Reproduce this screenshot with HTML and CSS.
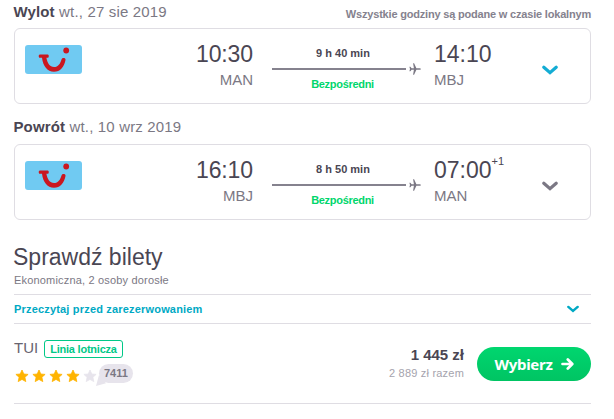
FILE: index.html
```html
<!DOCTYPE html>
<html lang="pl">
<head>
<meta charset="utf-8">
<title>Sprawdź bilety</title>
<link rel="stylesheet" href="styles.css">
</head>
<body>
<svg class="defs" aria-hidden="true">
  <symbol id="smile" viewBox="0 0 57 29">
    <path d="M14.8 9.4H22.8C24.1 9.5 24.1 12.6 22.8 12.7H21.4C22.4 18 24.8 22 29 22C33 22 35.4 18.6 36.6 14.2C37.3 12.4 40.9 12.8 40.5 15C39.2 22 35.2 26.8 29 26.8C22.2 26.8 18 20.9 17 12.7H14.8C13.4 12.6 13.4 9.4 14.8 9.4Z"/>
    <circle cx="41.2" cy="5.5" r="2.9"/>
  </symbol>
  <symbol id="chevron" viewBox="0 0 16 10"><path d="M1.8 2.2L8 7.6L14.2 2.2" fill="none" stroke="currentColor" stroke-width="3.2" stroke-linecap="round" stroke-linejoin="miter"/></symbol>
  <symbol id="plane" viewBox="0 0 12 12"><path d="M12 6C12 6.6 11 6.8 10 6.8H7.4L5.1 11.8H4.1L4.9 6.8H2.6L1.4 8.3H.4L1 6L.4 3.7H1.4L2.6 5.2H4.9L4.1.2H5.1L7.4 5.2H10C11 5.2 12 5.4 12 6Z"/></symbol>
  <symbol id="star" viewBox="0 0 14 14"><path d="M7 1L8.8 5L13.1 5.4L9.9 8.3L10.8 12.6L7 10.4L3.2 12.6L4.1 8.3L.9 5.4L5.2 5Z" fill="currentColor" stroke="currentColor" stroke-width=".8" stroke-linejoin="round"/></symbol>
</svg>
<main class="page">
  <header class="leg-head">
    <div><b>Wylot</b> wt., 27 sie 2019</div>
    <div class="note">Wszystkie godziny są podane w czasie lokalnym</div>
  </header>
  <section class="card">
    <svg class="logo"><use href="#smile"/></svg>
    <div class="stop from"><div class="time">10:30</div><div class="code">MAN</div></div>
    <div class="route">
      <div class="duration">9 h 40 min</div>
      <div class="track"><span class="line"></span><svg class="plane"><use href="#plane"/></svg></div>
      <div class="direct">Bezpośredni</div>
    </div>
    <div class="stop"><div class="time">14:10</div><div class="code">MBJ</div></div>
    <svg class="chevron blue"><use href="#chevron"/></svg>
  </section>
  <header class="leg-head return">
    <div><b>Powrót</b> wt., 10 wrz 2019</div>
  </header>
  <section class="card">
    <svg class="logo"><use href="#smile"/></svg>
    <div class="stop from"><div class="time">16:10</div><div class="code">MBJ</div></div>
    <div class="route">
      <div class="duration">8 h 50 min</div>
      <div class="track"><span class="line"></span><svg class="plane"><use href="#plane"/></svg></div>
      <div class="direct">Bezpośredni</div>
    </div>
    <div class="stop"><div class="time">07:00<span class="plus">+1</span></div><div class="code">MAN</div></div>
    <svg class="chevron"><use href="#chevron"/></svg>
  </section>
  <h1>Sprawdź bilety</h1>
  <p class="sub">Ekonomiczna, 2 osoby dorosłe</p>
  <div class="notice"><span>Przeczytaj przed zarezerwowaniem</span><svg class="chevron small"><use href="#chevron"/></svg></div>
  <section class="offer">
    <div class="seller">
      <div class="name">TUI <span class="tag">Linia lotnicza</span></div>
      <div class="rating">
        <svg class="star"><use href="#star"/></svg><svg class="star"><use href="#star"/></svg><svg class="star"><use href="#star"/></svg><svg class="star"><use href="#star"/></svg><svg class="star off"><use href="#star"/></svg>
        <span class="count">7411</span>
      </div>
    </div>
    <div class="price"><div class="amount">1 445 zł</div><div class="total">2 889 zł razem</div></div>
    <button class="choose"><span>Wybierz</span><svg class="arrow" viewBox="0 0 13 12"><path d="M1.5 6H11M6.8 1.5L11.3 6L6.8 10.5" fill="none" stroke="currentColor" stroke-width="2.7" stroke-linecap="round" stroke-linejoin="round"/></svg></button>
  </section>
</main>
</body>
</html>
```

FILE: styles.css
```css
* { box-sizing: border-box; }
body { margin: 0; background: #fff; color: #7b7884; font-family: "Liberation Sans", Arial, sans-serif; }
svg { display: block; flex: none; }
.defs { position: absolute; width: 0; height: 0; }
.page { width: 577px; margin-left: 14px; }
.leg-head { display: flex; justify-content: space-between; height: 28px; padding-top: 3px; font-size: 15px; line-height: 18px; letter-spacing: .16px; }
.leg-head > div:first-child { margin-left: -.6px; }
.leg-head b { color: #4a4653; }
.return { height: 40px; padding-top: 14px; }
.leg-head .note { font-size: 11px; font-weight: bold; line-height: 23px; letter-spacing: -.19px; color: #85828e; }
.card { display: grid; grid-template-columns: 57px 171px 19px 149px 13px 108px 16px; height: 76px; padding-left: 10px; border: 1px solid #dfdde3; border-radius: 6px; }
.logo { width: 57px; height: 29px; margin-top: 16px; border-radius: 3px; background: #70caf2; fill: #ca1720; }
.stop { grid-column: 6; grid-row: 1; padding-top: 11px; }
.stop.from { grid-column: 2; text-align: right; }
.time { height: 28px; font-size: 23px; line-height: 28px; color: #4a4653; white-space: nowrap; }
.from .time { letter-spacing: -.1px; }
.plus { position: relative; top: -13px; font-size: 11px; line-height: 1; }
.code { font-size: 15px; line-height: 23px; }
.route { grid-column: 4; grid-row: 1; padding-top: 17px; font-size: 11px; font-weight: bold; line-height: 14px; }
.duration, .direct { width: 141px; text-align: center; }
.duration { padding-left: 1px; color: #4a4653; }
.direct { letter-spacing: -.3px; color: #00d66c; }
.track { display: flex; align-items: center; gap: 3px; height: 17px; }
.line { width: 134px; height: 2px; background: #85828e; }
.plane { width: 12px; height: 12px; margin-top: 1px; fill: #7b7884; }
.chevron { grid-column: 7; grid-row: 1; width: 16px; height: 10px; margin-top: 36px; color: #7b7884; }
.blue { color: #13acd4; }
h1 { margin: 23px 0 0 -1px; font-size: 23px; line-height: 28px; font-weight: normal; color: #4a4653; }
.sub { margin: 0; height: 23px; font-size: 11px; line-height: 18px; letter-spacing: .18px; }
.notice { display: flex; align-items: center; justify-content: space-between; height: 30px; padding-right: 12px; border: solid #dfdde3; border-width: 1px 0; font-size: 11px; font-weight: bold; letter-spacing: .18px; color: #00a9c4; }
.notice .small { width: 12px; height: 8px; margin: 0; color: #00a9c4; }
.offer { display: flex; height: 80px; border-bottom: 1px solid #dfdde3; }
.seller { flex: 1; padding-top: 13px; }
.name { display: flex; align-items: center; gap: 6px; height: 20px; font-size: 15px; color: #68646f; }
.tag { width: 79px; height: 18px; margin-top: 3px; padding: 0 5px; border: 1px solid #00c887; border-radius: 3px; font-size: 11px; font-weight: bold; line-height: 17px; letter-spacing: -.22px; white-space: nowrap; color: #00c887; }
.rating { display: flex; align-items: center; gap: 3px; padding: 11px 0 0 1px; }
.star { width: 14px; height: 14px; color: #ffb400; }
.off { color: #e7e4ec; }
.count { position: relative; height: 19px; margin: -4px 0 0 -1px; padding: 0 5px; border-radius: 10px; background: #e7e4ec; font-size: 11px; font-weight: bold; line-height: 19px; }
.count::before { content: ""; position: absolute; left: -3px; bottom: -3px; width: 10px; height: 11px; background: #e7e4ec; clip-path: polygon(30% 0, 100% 75%, 0 100%); }
.price { padding: 22px 13px 0 0; text-align: right; }
.amount { font-size: 15px; line-height: 18px; font-weight: bold; color: #4a4653; }
.total { font-size: 11px; line-height: 18px; letter-spacing: .2px; color: #a5a3ad; }
.choose { display: flex; align-items: center; justify-content: center; gap: 8px; width: 114px; height: 34px; margin-top: 23px; padding: 0 0 1px; border: 0; border-radius: 17px; background: linear-gradient(#00d66f, #00c463); color: #fff; font: 700 15px "Noto Sans", sans-serif; letter-spacing: -.3px; }
.arrow { width: 13px; height: 12px; }
```
